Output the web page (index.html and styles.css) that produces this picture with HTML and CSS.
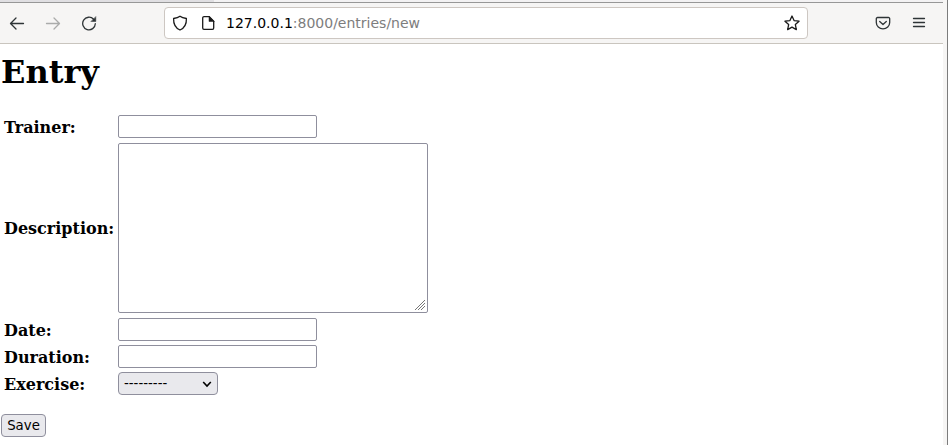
FILE: index.html
```html
<!DOCTYPE html>
<html lang="en">
<head>
<meta charset="utf-8">
<title>Entry</title>
<link rel="stylesheet" href="styles.css">
</head>
<body>
<div class="window">
  <div class="tabstrip"><span class="tab-edge"></span></div>
  <header class="toolbar">
    <svg class="icon back" viewBox="0 0 16 16"><path d="M14.500 8.500H2M7 3L1.500 8.500 7 14"/></svg>
    <svg class="icon forward" viewBox="0 0 16 16"><path d="M1.500 8.500H14M9 3l5.500 5.500L9 14"/></svg>
    <svg class="icon reload" viewBox="0 0 16 16"><path d="M12.600 4.200A6.300 6.300 0 1 0 14.300 8.700"/><path class="solid" d="M14.800 1.900v4.600h-4.600z"/></svg>
    <div class="urlbar">
      <svg class="icon shield" viewBox="0 0 16 16"><path d="M8 1.200C6.300 2.500 3.700 3.200 1.600 3.500C1.400 8.800 3.300 13 8 15C12.700 13 14.600 8.800 14.400 3.500C12.300 3.200 9.700 2.500 8 1.200z"/></svg>
      <svg class="icon file" viewBox="0 0 16 16"><path d="M4 1.700h5.300l4.400 4.400V13a1.300 1.300 0 0 1-1.300 1.300H4A1.300 1.300 0 0 1 2.700 13V3A1.300 1.300 0 0 1 4 1.700z"/><path class="solid" d="M9 1.500v5h5z"/></svg>
      <span class="url"><b>127.0.0.1</b>:8000/entries/new</span>
      <svg class="icon star" viewBox="0 0 16 16"><path d="M8 1l2.050 4.600 5 .600-3.700 3.400 1 5L8 12.100l-4.350 2.500 1-5L.950 6.200l5-.600z"/></svg>
    </div>
    <svg class="icon pocket" viewBox="0 0 16 16"><path d="M2.500 2.500h11a1.200 1.200 0 0 1 1.200 1.200V7.500a6.700 6.300 0 0 1-13.400 0V3.700a1.200 1.200 0 0 1 1.200-1.200zM4.700 6.500L8 9.500l3.300-3"/></svg>
    <svg class="icon menu" viewBox="0 0 16 16"><path d="M2.500 3.500h11M2.500 7.500h11M2.500 11.500h11"/></svg>
  </header>
  <main class="page">
    <h1>Entry</h1>
    <form>
      <div class="fields">
        <label for="trainer">Trainer:</label><input id="trainer" type="text">
        <label class="tall" for="description">Description:</label>
        <div class="area"><textarea id="description"></textarea><svg class="grip" viewBox="0 0 10 10"><path d="M0 10L10 0M3 10l7-7M6 10l4-4"/></svg></div>
        <label for="date">Date:</label><input id="date" type="text">
        <label for="duration">Duration:</label><input id="duration" type="text">
        <label for="exercise">Exercise:</label>
        <div class="choice"><select id="exercise"><option>---------</option></select><svg class="chevron" viewBox="0 0 10 10"><path d="M1.200 3L5 7 8.800 3"/></svg></div>
      </div>
      <button type="button">Save</button>
    </form>
  </main>
</div>
</body>
</html>
```

FILE: styles.css
```css
* { box-sizing: border-box; }
body {
  margin: 0;
  height: 445px;
  overflow: hidden;
  padding-right: 4px;
  background: #f6f5f4;
  border-right: 1px solid #7c7c7c;
}
.window { height: 445px; background: #fff; }
.tabstrip { height: 3px; background: #f3f2f3; border-bottom: 1px solid #979797; }
.tab-edge { display: block; width: 214px; height: 2px; background: #e0dfe2; }
.toolbar {
  display: flex;
  align-items: center;
  height: 41px;
  padding-left: 9px;
  background: #f6f5f4;
  border-bottom: 1px solid #c9c5be;
}
.icon {
  width: 16px;
  height: 16px;
  flex: none;
  fill: none;
  stroke: #2e3436;
  stroke-width: 1.3;
  stroke-linecap: round;
  stroke-linejoin: round;
}
.icon .solid { fill: #2e3436; stroke-width: .5; }
.forward { margin-left: 20px; stroke: #aaabaa; }
.reload { margin-left: 20px; }
.urlbar {
  display: flex;
  align-items: center;
  width: 644px;
  height: 32px;
  margin-left: 67px;
  padding: 0 7px;
  background: #fff;
  border: 1px solid #cdc7c2;
  border-radius: 4px;
}
.urlbar .icon { stroke: #1a1a1a; }
.urlbar .solid { fill: #1a1a1a; }
.file { margin-left: 12px; }
.url {
  flex: 1;
  margin-left: 10px;
  font: 14px/18px "DejaVu Sans", sans-serif;
  color: #7d7d7d;
}
.url b { font-weight: 400; color: #000; }
.pocket { margin-left: 67px; }
.menu { margin-left: 20px; }
.page { padding: 9px 1px 0; font-family: "DejaVu Serif", serif; color: #000; }
h1 { margin: 0 0 24px; font-size: 32px; line-height: 38px; }
.fields {
  display: grid;
  grid-template-columns: 114px 310px;
  grid-template-rows: 23px 172px 23px 23px 23px;
  row-gap: 4px;
  column-gap: 3px;
  align-items: center;
  margin-bottom: 19px;
}
label { padding: 2px 0 0 3px; font-weight: 700; font-size: 16px; line-height: 19px; white-space: nowrap; }
.tall { padding-top: 0; }
input, textarea { margin: 0; background: #fff; border: 1px solid #8f8f9d; border-radius: 2px; }
input { width: 199px; height: 23px; }
.area { position: relative; height: 170px; }
textarea { display: block; width: 310px; height: 170px; resize: none; }
.grip { position: absolute; right: 3px; bottom: 3px; width: 10px; height: 10px; stroke: #777; stroke-width: 1; }
.choice { position: relative; width: 100px; height: 23px; }
select, button {
  appearance: none;
  margin: 0;
  height: 23px;
  background: #e9e9ed;
  border: 1px solid #8f8f9d;
  border-radius: 4px;
  font: 13.333px "DejaVu Sans", sans-serif;
  color: #000;
}
select { display: block; width: 100px; padding: 0 5px; }
.chevron { position: absolute; right: 6px; top: 7px; width: 10px; height: 10px; fill: none; stroke: #000; stroke-width: 1.600; }
button { display: block; width: 45px; padding: 0; }
```
